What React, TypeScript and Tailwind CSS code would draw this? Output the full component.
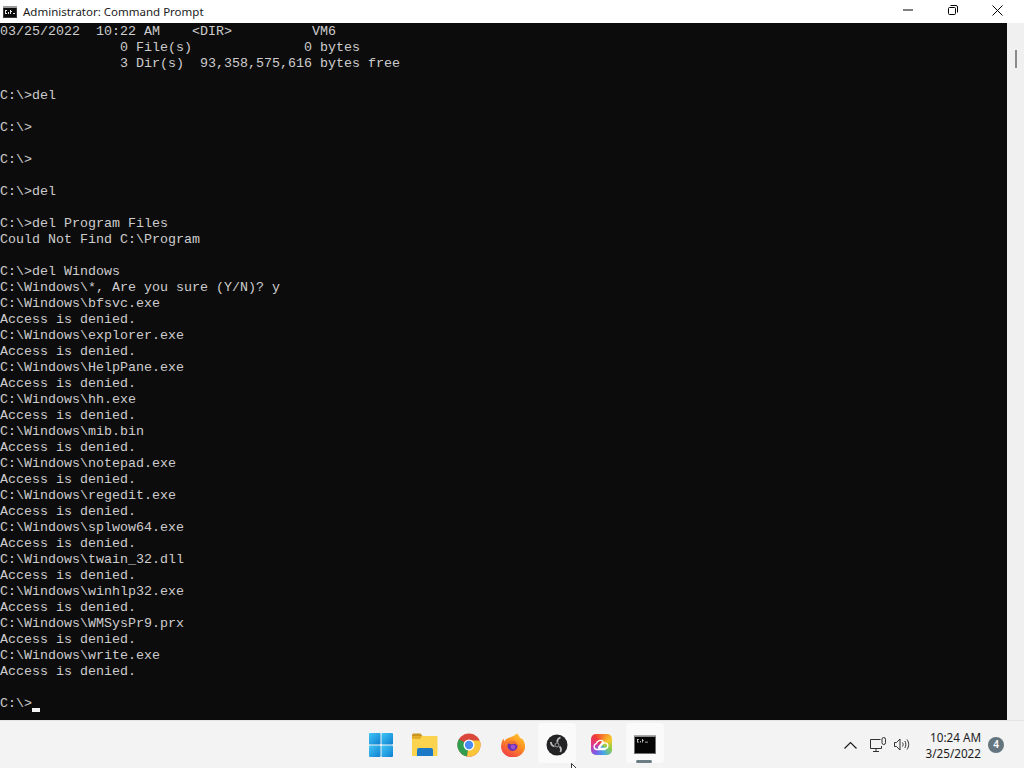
const lines = [
  '03/25/2022  10:22 AM    <DIR>          VM6',
  '               0 File(s)              0 bytes',
  '               3 Dir(s)  93,358,575,616 bytes free',
  '',
  'C:\\>del',
  '',
  'C:\\>',
  '',
  'C:\\>',
  '',
  'C:\\>del',
  '',
  'C:\\>del Program Files',
  'Could Not Find C:\\Program',
  '',
  'C:\\>del Windows',
  'C:\\Windows\\*, Are you sure (Y/N)? y',
  'C:\\Windows\\bfsvc.exe',
  'Access is denied.',
  'C:\\Windows\\explorer.exe',
  'Access is denied.',
  'C:\\Windows\\HelpPane.exe',
  'Access is denied.',
  'C:\\Windows\\hh.exe',
  'Access is denied.',
  'C:\\Windows\\mib.bin',
  'Access is denied.',
  'C:\\Windows\\notepad.exe',
  'Access is denied.',
  'C:\\Windows\\regedit.exe',
  'Access is denied.',
  'C:\\Windows\\splwow64.exe',
  'Access is denied.',
  'C:\\Windows\\twain_32.dll',
  'Access is denied.',
  'C:\\Windows\\winhlp32.exe',
  'Access is denied.',
  'C:\\Windows\\WMSysPr9.prx',
  'Access is denied.',
  'C:\\Windows\\write.exe',
  'Access is denied.',
  '',
]

function TitleIcon() {
  return (
    <svg width="14" height="12" viewBox="0 0 14 12">
      <rect x="0" y="0" width="14" height="12" fill="#3a3a3a" />
      <rect x="0" y="0" width="14" height="2" fill="#9a9a9a" />
      <rect x="1" y="2" width="12" height="9" fill="#0a0a0a" />
      <path d="M2 4h2v1H3v2h1v1H2zM5 6h1v2H5zM7 4h1v1h1v1H8v2H7zM10 7h2v1h-2z" fill="#e8e8e8" />
    </svg>
  )
}

function CmdIcon() {
  return (
    <svg width="22" height="19" viewBox="0 0 22 19">
      <rect x="0" y="0" width="22" height="19" fill="#6f6f6f" />
      <rect x="0" y="0" width="22" height="1.500" fill="#a8a8a8" />
      <rect x="1" y="2" width="20" height="16" fill="#050505" />
      <path d="M3 4h2v.8H3.800v2H5v.8H3zM6 6h.8v1.600H6zM8 4h.8v1h1v.8h-1v1.800H8zM11 6.800h3v.8h-3z" fill="#d8d8d8" />
    </svg>
  )
}

function WinLogo() {
  return (
    <svg width="24" height="24" viewBox="0 0 24 24">
      <defs>
        <linearGradient id="winA" x1="0" y1="0" x2="1" y2="1">
          <stop offset="0" stopColor="#3fc6f7" />
          <stop offset="1" stopColor="#0f7fd0" />
        </linearGradient>
      </defs>
      <rect x="0" y="0" width="11.500" height="11.500" rx="1" fill="url(#winA)" />
      <rect x="12.500" y="0" width="11.500" height="11.500" rx="1" fill="url(#winA)" />
      <rect x="0" y="12.500" width="11.500" height="11.500" rx="1" fill="url(#winA)" />
      <rect x="12.500" y="12.500" width="11.500" height="11.500" rx="1" fill="url(#winA)" />
    </svg>
  )
}

function FolderIcon() {
  return (
    <svg width="26" height="24" viewBox="0 0 26 24">
      <path d="M0 2a1.500 1.500 0 0 1 1.500-1.500h7l2 2.500H0z" fill="#c9961f" />
      <path d="M0 3h24.500a1 1 0 0 1 1 1v18a1 1 0 0 1-1 1H1a1 1 0 0 1-1-1z" fill="#fbd34f" />
      <path d="M0 3h10l-2 3H0z" fill="#e3ad2a" />
      <path d="M5 23v-6a2 2 0 0 1 2-2h12a2 2 0 0 1 2 2v6z" fill="#1b79c6" />
    </svg>
  )
}

function ChromeIcon() {
  return (
    <svg width="24" height="24" viewBox="0 0 24 24">
      <circle cx="12" cy="12" r="11.500" fill="#d9483b" />
      <path d="M12 12 1.900 6.200A11.500 11.500 0 0 0 10 23.300z" fill="#2f9e4f" />
      <path d="M12 12 10 23.300A11.500 11.500 0 0 0 22.600 7.500L12 7.500z" fill="#fbc53a" />
      <circle cx="12" cy="12" r="5.500" fill="#ffffff" />
      <circle cx="12" cy="12" r="4.200" fill="#4a8bf0" />
    </svg>
  )
}

function FirefoxIcon() {
  return (
    <svg width="24" height="24" viewBox="0 0 24 24">
      <defs>
        <linearGradient id="foxA" x1="0.800" y1="0" x2="0.200" y2="1">
          <stop offset="0" stopColor="#ffc72e" />
          <stop offset="0.450" stopColor="#ff8a24" />
          <stop offset="1" stopColor="#f0384a" />
        </linearGradient>
      </defs>
      <path d="M16 .5c2 2 2.500 3 3 4.500 1 .3 2 .6 2.500 1 1.500 2 2.500 4.500 2.500 6.500a12 11 0 1 1-23.500-2c.3-2 1-3.500 2-5l.8 3c1-2 2.500-3 4-3.500C11 4 14 2 16 .5z" fill="url(#foxA)" />
      <circle cx="11.500" cy="13" r="5" fill="#6a2fb5" />
      <path d="M6 10c2-2 5-3 8-1.500 2 1 3 3 2.800 5-1-2-3-3-5-2.500-1 .3-1.800.4-2.800 0-1-.3-2-.6-3-1z" fill="#f4752c" />
      <circle cx="12" cy="14" r="2.300" fill="#9a52d0" />
    </svg>
  )
}

function ObsIcon() {
  return (
    <svg width="22" height="22" viewBox="0 0 22 22">
      <circle cx="11" cy="11" r="10.500" fill="#232326" />
      <g fill="none" stroke="#bdbdbd" strokeWidth="1.800">
        <path d="M11.500 8.500c-.5-2 .5-4 3-5" />
        <path d="M8.500 12.500c-2-.5-3.500-2-3.600-4.500" />
        <path d="M13.500 12.500c1.500 1.300 2 3.300.8 5.500" />
      </g>
      <circle cx="11" cy="11" r="2" fill="#232326" stroke="#9a9a9a" strokeWidth="1" />
    </svg>
  )
}

function CreativeCloudIcon() {
  return (
    <div className="relative flex h-[21px] w-[21px] items-center justify-center rounded-[5px] bg-[conic-gradient(from_320deg,#ef3a3a,#f7842a,#f7c82a,#8ccf45,#3fa9e8,#7d5be6,#e0358f,#ef3a3a)]">
      <svg width="16" height="12" viewBox="0 0 16 12" fill="none" stroke="#ffffff" strokeWidth="1.400" strokeLinecap="round" strokeLinejoin="round">
        <path d="M4 10.500a3 3 0 0 1-.6-5.900C4 1.800 8 .3 10.200 2.500L5.800 8c-.5.700 0 1.500.9 1.500h5.300a2.800 2.800 0 0 0 0-5.600c-1.500 0-2.600 1-3.600 2.200L7 8" />
        <path d="M4 10.500h8" />
      </svg>
    </div>
  )
}

function TaskIcon({ children, active, open, className }: { children: React.ReactNode; active?: boolean; open?: boolean; className: string }) {
  return (
    <div className={`relative flex h-[47px] items-center justify-center ${className}`}>
      {active && <div className="absolute left-[3px] top-[2px] h-10 w-[38px] rounded bg-[#fafafa]" />}
      <div className="relative flex">{children}</div>
      {open && <div className="absolute bottom-[5px] left-[13px] h-[3px] w-4 rounded-full bg-[#6b7c85]" />}
    </div>
  )
}

export default function App() {
  return (
    <div className="relative flex h-[768px] w-[1024px] flex-col overflow-hidden bg-white">
      {/* title bar */}
      <div className="flex h-[23px] shrink-0 items-center bg-white">
        <div className="ml-[3px] flex w-5">
          <TitleIcon />
        </div>
        <span className="text-[11.500px] text-[#1a1a1a] [font-family:'Noto_Sans',sans-serif]">
          Administrator: Command Prompt
        </span>
        <div className="ml-auto flex h-full items-center pb-[3px] text-black">
          <div className="flex w-[45px] items-center justify-center">
            <svg width="10" height="10" viewBox="0 0 10 10"><path d="M0 5h10" stroke="currentColor" /></svg>
          </div>
          <div className="flex w-[45px] items-center justify-center">
            <svg width="10" height="10" viewBox="0 0 10 10" fill="none" stroke="currentColor">
              <rect x=".5" y="2.500" width="7" height="7" rx="1" />
              <path d="M2.500 .5h5.500a1.500 1.500 0 0 1 1.500 1.500v5.500" />
            </svg>
          </div>
          <div className="flex w-[45px] items-center justify-center">
            <svg width="11" height="11" viewBox="0 0 11 11"><path d="M.5 .5l10 10M10.500 .5l-10 10" stroke="currentColor" /></svg>
          </div>
        </div>
        <div className="w-[4px]" />
      </div>

      {/* console */}
      <div className="flex min-h-0 flex-1">
        <div className="flex-1 overflow-hidden bg-[#0c0c0c] pt-px text-[13.33px] leading-[16px] text-[#cccccc] [font-family:'Liberation_Mono',monospace]">
          {lines.map((l, i) => (
            <div key={i} className="h-4 whitespace-pre">{l}</div>
          ))}
          <div className="h-4 whitespace-pre">
            C:\&gt;<span className="inline-block h-1 w-2 bg-[#f2f2f2] align-[-5px]" />
          </div>
        </div>
        <div className="relative w-[17px] shrink-0 bg-[#f0f0f0]">
          <div className="absolute left-[8px] top-[27px] h-[18px] w-[2px] bg-[#8a8a8a]" />
        </div>
      </div>

      {/* taskbar */}
      <div className="grid h-12 shrink-0 grid-cols-[1fr_auto_1fr] border-t border-[#e3e3e3] bg-[#f3f3f3]">
        <div />
        <div className="flex">
          <TaskIcon className="w-[45px]"><WinLogo /></TaskIcon>
          <TaskIcon className="w-11"><FolderIcon /></TaskIcon>
          <TaskIcon className="w-11"><ChromeIcon /></TaskIcon>
          <TaskIcon className="w-11"><FirefoxIcon /></TaskIcon>
          <TaskIcon className="w-11" active><ObsIcon /></TaskIcon>
          <TaskIcon className="w-11"><CreativeCloudIcon /></TaskIcon>
          <TaskIcon className="w-[43px]" active open><CmdIcon /></TaskIcon>
        </div>
        <div className="flex items-center justify-end pr-[20px] text-[#1c1c1c]">
          <svg width="13" height="8" viewBox="0 0 13 8" fill="none" stroke="currentColor" strokeWidth="1.200" className="mr-[13px]">
            <path d="M.5 7.500l6-6 6 6" />
          </svg>
          <svg width="16" height="15" viewBox="0 0 16 15" fill="none" stroke="currentColor" strokeWidth=".9" className="mr-[8px]">
            <path d="M10.500 2.500H.5v9h11V9M6 11.500v3M3 14.500h6" />
            <rect x="12" y=".5" width="3.500" height="7" rx="1.700" />
          </svg>
          <svg width="16" height="13" viewBox="0 0 16 13" fill="none" stroke="currentColor" strokeWidth=".9" className="mr-[16px]">
            <path d="M.5 4.500v4h2l3.500 3.500v-11L2.500 4.500z" />
            <path d="M8.500 4.500c.8 1.300.8 2.700 0 4M10.800 3c1.400 2.300 1.400 4.700 0 7M13 1.500c2.200 3.200 2.200 6.800 0 10" />
          </svg>
          <div className="text-right text-[11.700px] leading-[16px] [font-family:'Noto_Sans',sans-serif]">
            <div>10:24 AM</div>
            <div>3/25/2022</div>
          </div>
          <div className="ml-[7px] flex h-4 w-4 items-center justify-center rounded-full bg-[#64757f] text-[10px] font-semibold text-white [font-family:'Noto_Sans',sans-serif]">
            4
          </div>
        </div>
      </div>

      {/* mouse pointer */}
      <svg width="8" height="12" viewBox="0 0 8 12" className="absolute left-[571px] top-[763px]">
        <path d="M.5 .5v9l2.300-2 1.700 4 1.500-.6-1.700-3.900H7z" fill="#ffffff" stroke="#000000" strokeWidth=".8" />
      </svg>
    </div>
  )
}
